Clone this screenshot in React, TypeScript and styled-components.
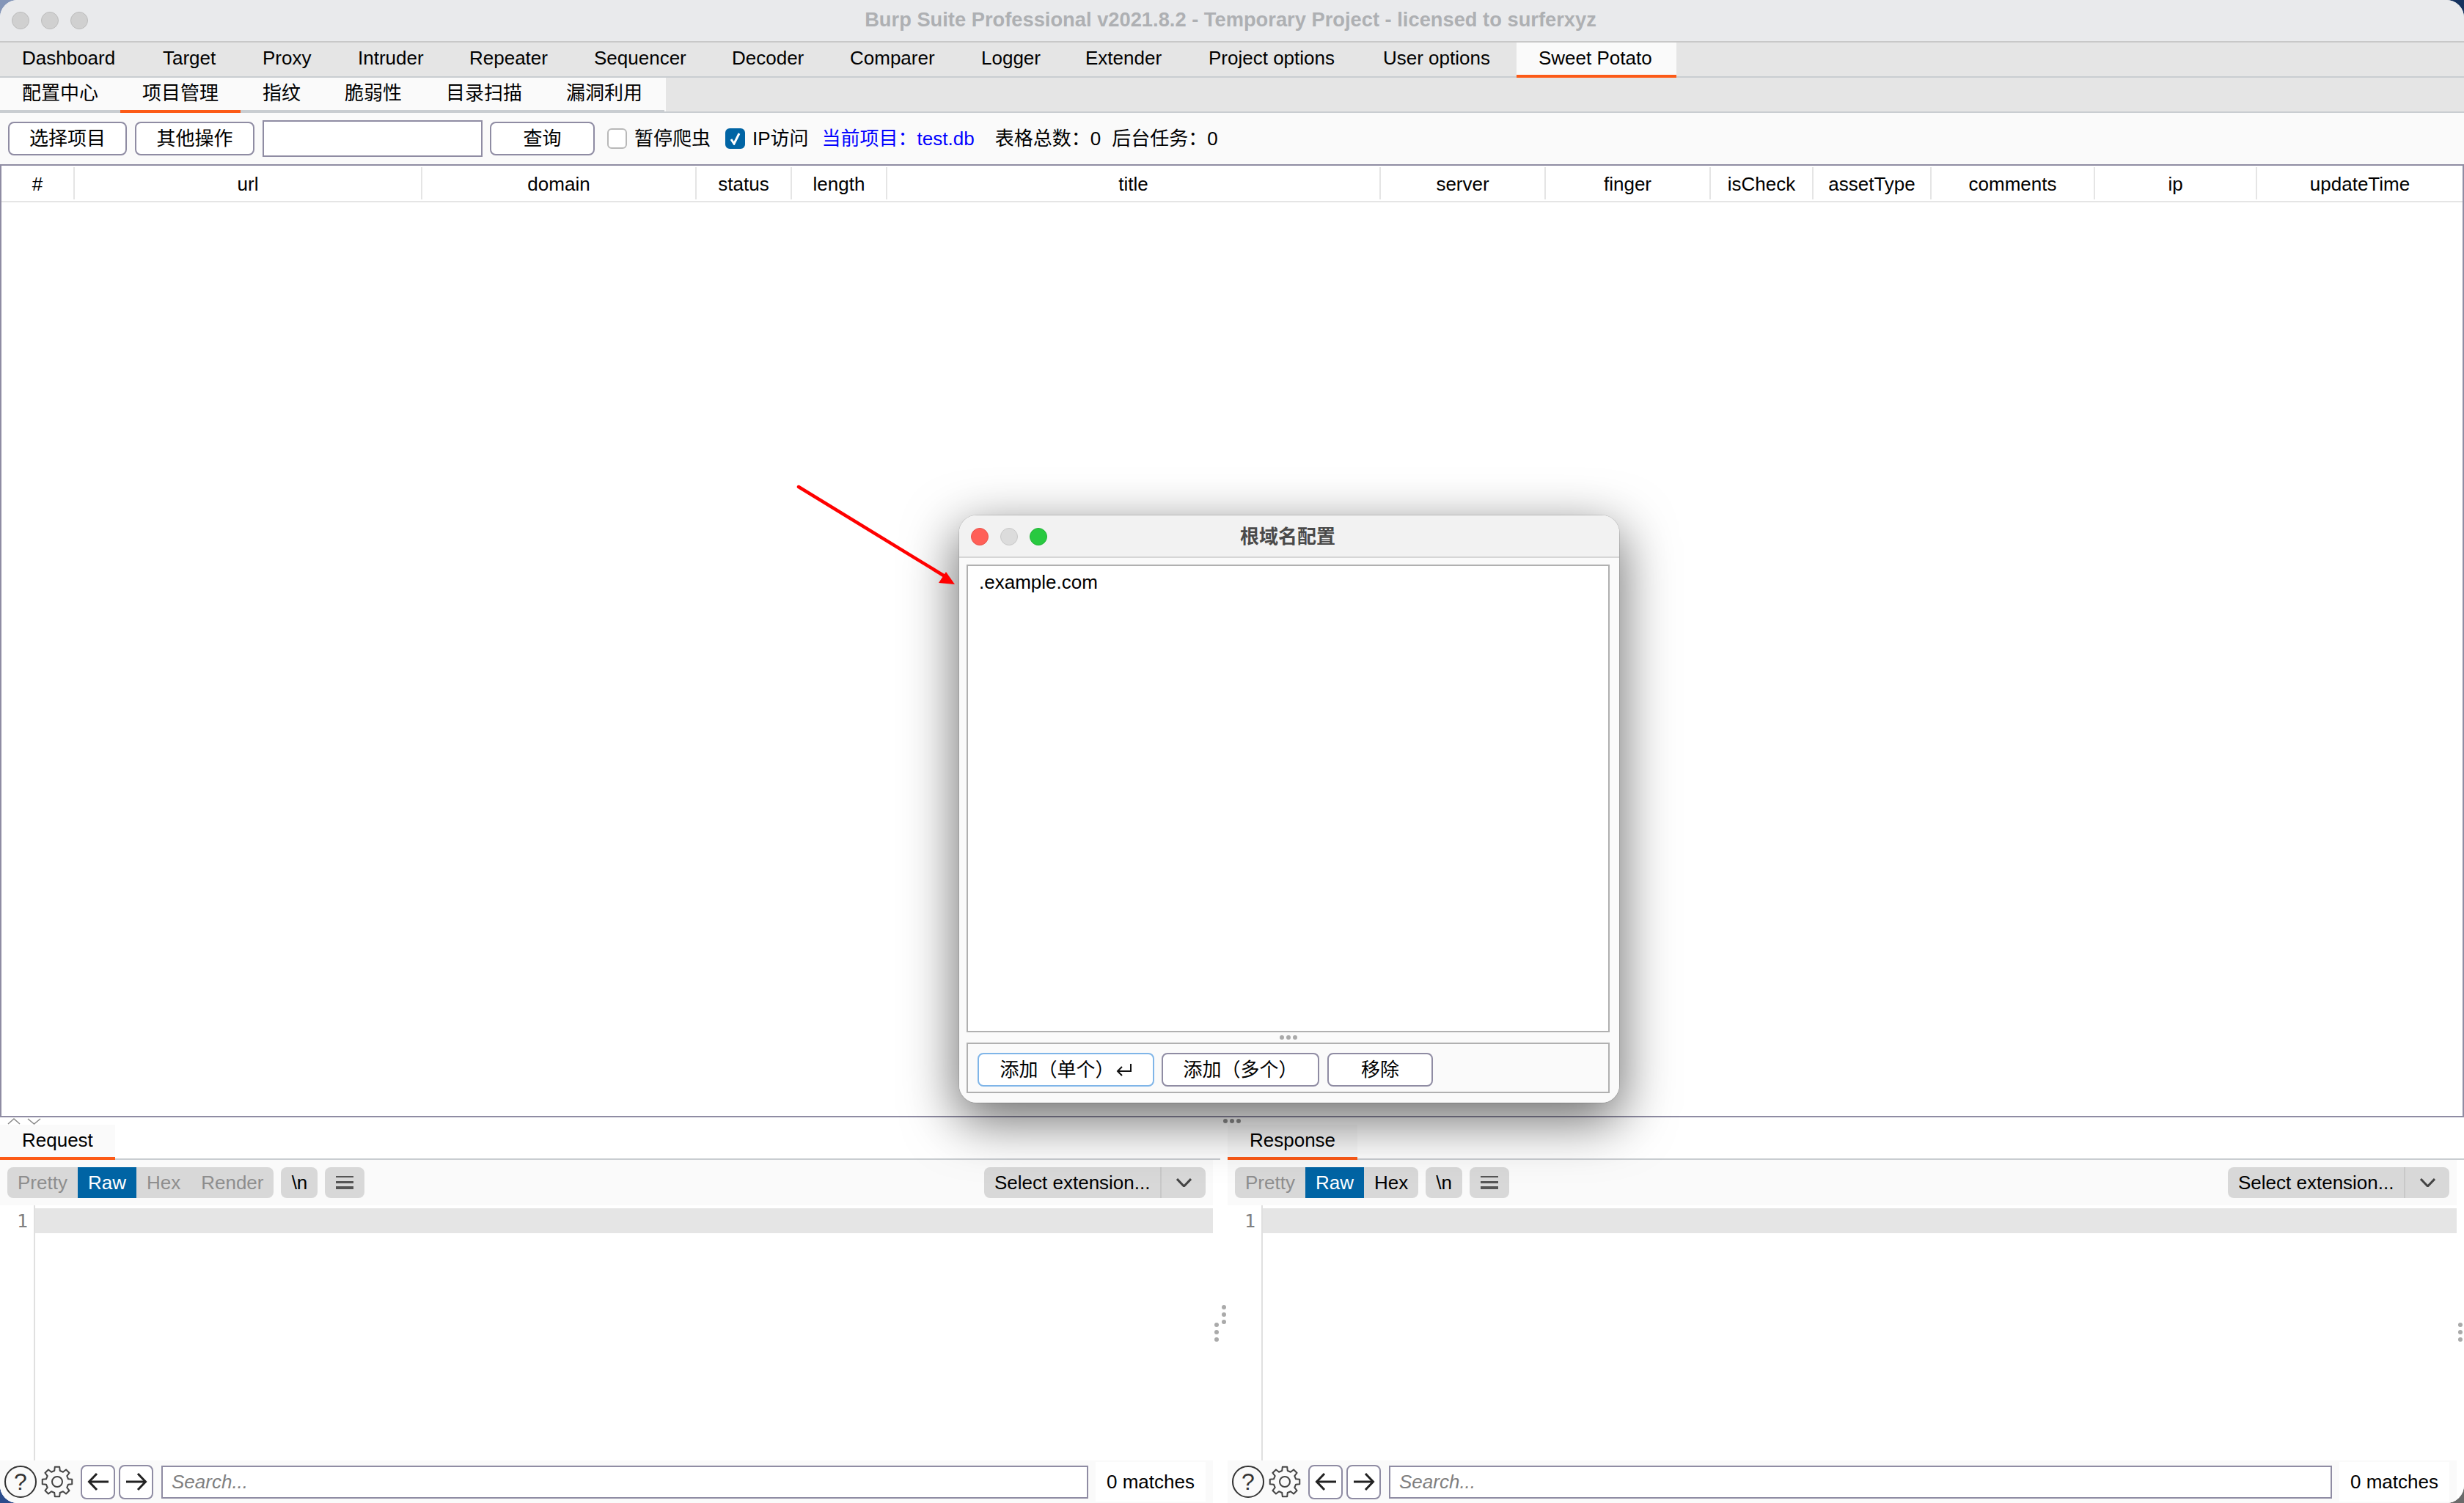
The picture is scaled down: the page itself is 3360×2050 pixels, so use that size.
import React from "react";
import styled, { createGlobalStyle } from "styled-components";

const GlobalStyle = createGlobalStyle`
  html, body {
    margin: 0;
    padding: 0;
    width: 3360px;
    height: 2050px;
    overflow: hidden;
    background: conic-gradient(#15335f 0 25%, #6a6a6a 0 50%, #2b4c8c 0 75%, #8496b8 0);
  }
  * {
    box-sizing: border-box;
  }
`;

const FONT = `"Liberation Sans", "Noto Sans CJK SC", sans-serif`;
const EDGE = "#8f8ca3";
const ORANGE = "#fc5a17";

const mainTabs: [string, number][] = [
  ["Dashboard", 192],
  ["Target", 136],
  ["Proxy", 130],
  ["Intruder", 152],
  ["Repeater", 170],
  ["Sequencer", 188],
  ["Decoder", 161],
  ["Comparer", 179],
  ["Logger", 142],
  ["Extender", 168],
  ["Project options", 238],
  ["User options", 212],
  ["Sweet Potato", 218],
];

const subTabs = ["配置中心", "项目管理", "指纹", "脆弱性", "目录扫描", "漏洞利用"];

const columns = [
  "#", "url", "domain", "status", "length", "title", "server",
  "finger", "isCheck", "assetType", "comments", "ip", "updateTime",
];

const Window = styled.div`
  position: relative;
  width: 3360px;
  height: 2050px;
  display: flex;
  flex-direction: column;
  border-radius: 24px;
  overflow: hidden;
  background: #fff;
  color: #000;
  font: 26px/30px ${FONT};
`;

const TitleBar = styled.div`
  height: 58px;
  flex: none;
  display: flex;
  align-items: center;
  justify-content: center;
  position: relative;
  padding: 0 4px 2px 0;
  background: #e9eaec;
  border-bottom: 2px solid #c8c8c8;
  color: #aeb0b3;
  font-size: 27.3px;
  font-weight: 700;
`;

const Lights = styled.div`
  position: absolute;
  left: 16px;
  top: 16px;
  display: flex;
  gap: 16px;
`;

const Light = styled.span<{ $color: string; $edge: string }>`
  width: 24px;
  height: 24px;
  border-radius: 50%;
  background: ${(p) => p.$color};
  border: 1px solid ${(p) => p.$edge};
`;

const TabBar = styled.div`
  height: 48px;
  flex: none;
  display: flex;
  background: #e5e5e5;
  border-bottom: 2px solid #c9cdd1;
`;

const MainTab = styled.div<{ $width: number; $active?: boolean }>`
  width: ${(p) => p.$width}px;
  height: 48px;
  padding: 0 0 3px 30px;
  display: flex;
  align-items: center;
  background: ${(p) => (p.$active ? "#fafafa" : "transparent")};
  border-bottom: 4px solid ${(p) => (p.$active ? ORANGE : "transparent")};
`;

const SubTab = styled.div<{ $active?: boolean }>`
  height: 48px;
  padding: 0 30px 2px;
  display: flex;
  align-items: center;
  background: #fafafa;
  border-bottom: 4px solid ${(p) => (p.$active ? ORANGE : "#c9cdd1")};
`;

const SubTabEdge = styled.div`
  width: 2px;
  background: #fafafa;
`;

const Toolbar = styled.div`
  height: 70px;
  flex: none;
  display: flex;
  align-items: center;
  padding-left: 11px;
  background: #fafafa;
`;

const Button = styled.div<{ $width: number; $gap?: number; $focus?: boolean }>`
  width: ${(p) => p.$width}px;
  height: 46px;
  flex: none;
  margin-right: ${(p) => p.$gap ?? 11}px;
  display: flex;
  align-items: center;
  justify-content: center;
  gap: 2px;
  background: #fff;
  border: 2px solid ${(p) => (p.$focus ? "#7fb5e8" : EDGE)};
  border-radius: 8px;
`;

const TextBox = styled.input`
  width: 300px;
  height: 50px;
  flex: none;
  margin-right: 10px;
  background: #fff;
  border: 2px solid ${EDGE};
  border-radius: 0;
  outline: none;
`;

const CheckBox = styled.span<{ $on?: boolean }>`
  width: 27px;
  height: 28px;
  flex: none;
  margin-right: 10px;
  display: flex;
  align-items: center;
  justify-content: center;
  border-radius: 6px;
  background: ${(p) => (p.$on ? "#0064a4" : "#fff")};
  border: 2px solid ${(p) => (p.$on ? "#0064a4" : "#b8b8b8")};
`;

const Label = styled.span<{ $gap: number; $blue?: boolean }>`
  flex: none;
  margin-right: ${(p) => p.$gap}px;
  color: ${(p) => (p.$blue ? "#0000ff" : "#000")};
  white-space: nowrap;
`;

const TableFrame = styled.div`
  flex: 1;
  min-height: 0;
  background: #fff;
  border: 2px solid ${EDGE};
`;

const HeaderRow = styled.div`
  height: 50px;
  display: grid;
  grid-template-columns: 100px 474px 374px 130px 130px 673px 225px 225px 140px 161px 223px 221px 1fr;
  border-bottom: 2px solid #e5e5e5;
`;

const HeaderCell = styled.div`
  height: 44px;
  margin-top: 2px;
  padding-top: 2px;
  display: flex;
  align-items: center;
  justify-content: center;
  border-right: 2px solid #e5e5e5;

  &:last-child {
    border-right: 0;
  }
`;

const Lower = styled.div`
  position: relative;
  height: 526px;
  flex: none;
  display: flex;
  justify-content: space-between;
  background: #fff;
`;

const Pane = styled.div<{ $width: number }>`
  width: ${(p) => p.$width}px;
  display: flex;
  flex-direction: column;
`;

const PaneTabs = styled.div`
  height: 58px;
  flex: none;
  display: flex;
  align-items: flex-end;
  border-bottom: 2px solid #c9cdd1;
`;

const PaneTab = styled.div`
  height: 48px;
  margin-bottom: -2px;
  padding: 0 30px 2px;
  display: flex;
  align-items: center;
  background: #fafafa;
  border-bottom: 4px solid ${ORANGE};
`;

const PaneInner = styled.div`
  flex: 1;
  min-height: 0;
  margin-right: 10px;
  display: flex;
  flex-direction: column;
`;

const ViewBar = styled.div`
  height: 62px;
  flex: none;
  display: flex;
  align-items: flex-start;
  gap: 10px;
  padding: 10px 10px 0;
  background: #fafafa;
`;

const Group = styled.div`
  height: 42px;
  display: flex;
  border-radius: 8px;
  overflow: hidden;
  background: #d8d8d8;
`;

const Segment = styled.div<{ $state: "off" | "on" | "plain" }>`
  padding: 0 14px;
  display: flex;
  align-items: center;
  color: ${(p) => (p.$state === "off" ? "#8e8e8e" : p.$state === "on" ? "#fff" : "#000")};
  background: ${(p) => (p.$state === "on" ? "#0064a4" : "transparent")};
`;

const IconChip = styled.div<{ $width: number }>`
  width: ${(p) => p.$width}px;
  height: 42px;
  display: flex;
  align-items: center;
  justify-content: center;
  border-radius: 8px;
  background: #d8d8d8;
`;

const SelectBox = styled.div`
  width: 302px;
  height: 42px;
  margin-left: auto;
  display: flex;
  align-items: center;
  border-radius: 8px;
  background: #d8d8d8;
  white-space: nowrap;
`;

const SelectText = styled.div`
  width: 242px;
  height: 42px;
  padding-left: 14px;
  display: flex;
  align-items: center;
  border-right: 2px solid #c8c8c8;
`;

const SelectArrow = styled.div`
  flex: 1;
  display: flex;
  align-items: center;
  justify-content: center;
`;

const Editor = styled.div`
  flex: 1;
  min-height: 0;
  display: flex;
  background: #fff;
`;

const Gutter = styled.div`
  width: 48px;
  flex: none;
  padding: 5px 8px 0 0;
  text-align: right;
  border-right: 2px solid #e0e0e0;
  color: #808080;
  font: 25px/34px "DejaVu Sans Mono", monospace;
`;

const LineHighlight = styled.div`
  flex: 1;
  height: 34px;
  margin-top: 4px;
  background: #e5e5e5;
`;

const SearchBar = styled.div`
  height: 58px;
  flex: none;
  display: flex;
  align-items: center;
  padding: 0 10px 0 6px;
  background: #fafafa;
`;

const HelpIcon = styled.span`
  width: 44px;
  height: 44px;
  flex: none;
  display: flex;
  align-items: center;
  justify-content: center;
  border: 2px solid #333;
  border-radius: 50%;
  color: #333;
  font-size: 32px;
`;

const GearIcon = styled.svg`
  width: 44px;
  height: 44px;
  flex: none;
  margin: 0 10px 0 6px;
`;

const ArrowButton = styled.div`
  width: 47px;
  height: 47px;
  flex: none;
  margin-right: 5px;
  display: flex;
  align-items: center;
  justify-content: center;
  background: #fff;
  border: 2px solid ${EDGE};
  border-radius: 8px;
`;

const SearchInput = styled.input`
  flex: 1;
  min-width: 0;
  height: 45px;
  margin-left: 6px;
  padding: 0 12px;
  background: #fff;
  border: 2px solid ${EDGE};
  border-radius: 0;
  outline: none;
  font: italic 26px ${FONT};

  &::placeholder {
    color: #808080;
    opacity: 1;
  }
`;

const Matches = styled.div`
  width: 150px;
  height: 54px;
  flex: none;
  margin-left: 10px;
  display: flex;
  align-items: center;
  justify-content: center;
  background: #fff;
`;

const Dots = styled.div<{ $column?: boolean; $color?: string }>`
  display: flex;
  flex-direction: ${(p) => (p.$column ? "column" : "row")};
  gap: ${(p) => (p.$column ? "4px" : "3px")};

  span {
    width: 6px;
    height: 6px;
    border-radius: 50%;
    background: ${(p) => p.$color ?? "#aaa"};
  }
`;

const Grip = styled.div<{ $left: number; $top: number }>`
  position: absolute;
  left: ${(p) => p.$left}px;
  top: ${(p) => p.$top}px;
  display: flex;
`;

const Dialog = styled.div`
  position: absolute;
  left: 1308px;
  top: 703px;
  width: 900px;
  height: 801px;
  display: flex;
  flex-direction: column;
  border-radius: 24px;
  overflow: hidden;
  background: #fafafa;
`;

const DialogShadow = styled.div`
  position: absolute;
  left: 1308px;
  top: 703px;
  width: 900px;
  height: 801px;
  border-radius: 24px;
  box-shadow: 0 22px 70px 4px rgba(0, 0, 0, 0.56), 0 0 0 1px rgba(0, 0, 0, 0.12);
`;

const DialogTitle = styled.div`
  height: 58px;
  flex: none;
  position: relative;
  display: flex;
  align-items: center;
  justify-content: center;
  padding: 2px 4px 0 0;
  background: #f2f2f2;
  border-bottom: 2px solid #d6d6d6;
  color: #4a4a4a;
  font-weight: 700;
`;

const DialogLights = styled(Lights)`
  top: 17px;
`;

const DialogBody = styled.div`
  flex: 1;
  min-height: 0;
  display: flex;
  flex-direction: column;
  padding: 9px 13px 13px 10px;
`;

const DomainArea = styled.div`
  flex: 1;
  min-height: 0;
  padding: 7px 15px;
  background: #fff;
  border: 2px solid #b0b0b0;
`;

const DialogGrip = styled.div`
  height: 14px;
  flex: none;
  display: flex;
  align-items: center;
  justify-content: center;
`;

const DialogActions = styled.div`
  height: 69px;
  flex: none;
  display: flex;
  align-items: center;
  padding: 5px 0 0 13px;
  background: #fafafa;
  border: 2px solid #b0b0b0;
`;

const Annotation = styled.svg`
  position: absolute;
  left: 1080px;
  top: 655px;
  width: 230px;
  height: 150px;
`;

const gearPath = (() => {
  const pts: string[] = [];
  const at = (r: number, deg: number) => {
    const a = (deg * Math.PI) / 180;
    return `${(22 + r * Math.cos(a)).toFixed(2)} ${(22 + r * Math.sin(a)).toFixed(2)}`;
  };
  for (let i = 0; i < 8; i++) {
    const a = i * 45 - 90;
    pts.push(at(15.5, a - 14), at(20.5, a - 9), at(20.5, a + 9), at(15.5, a + 14));
  }
  return `M${pts.join("L")}Z`;
})();

const Gear = () => (
  <GearIcon viewBox="0 0 44 44" fill="none" stroke="#444" strokeWidth="2">
    <path d={gearPath} strokeLinejoin="round" />
    <circle cx="22" cy="22" r="7" />
  </GearIcon>
);

const Arrow = ({ dir }: { dir: "left" | "right" }) => (
  <svg width="30" height="26" viewBox="0 0 30 26" fill="none" stroke="#222" strokeWidth="3">
    {dir === "left" ? (
      <>
        <path d="M2 13H29" />
        <path d="M13 2 2.5 13 13 24" />
      </>
    ) : (
      <>
        <path d="M1 13H28" />
        <path d="M17 2 27.5 13 17 24" />
      </>
    )}
  </svg>
);

const MenuBars = () => (
  <svg width="24" height="18" viewBox="0 0 24 18" fill="#555">
    <rect x="0" y="0" width="24" height="2" />
    <rect x="0" y="7" width="24" height="3" />
    <rect x="0" y="14" width="24" height="4" />
  </svg>
);

const Chevron = ({ up, w, h, color, sw }: { up?: boolean; w: number; h: number; color: string; sw: number }) => (
  <svg width={w} height={h} viewBox={`0 0 ${w} ${h}`} fill="none" stroke={color} strokeWidth={sw}>
    <path d={up ? `M1 ${h - 1} ${w / 2} 1 ${w - 1} ${h - 1}` : `M1 1 ${w / 2} ${h - 1} ${w - 1} 1`} />
  </svg>
);

const ThreeDots = ({ column, color }: { column?: boolean; color?: string }) => (
  <Dots $column={column} $color={color}>
    <span />
    <span />
    <span />
  </Dots>
);

const MessagePane = ({ name, width, full, hexOn }: { name: string; width: number; full: boolean; hexOn: boolean }) => (
  <Pane $width={width}>
    <PaneTabs>
      <PaneTab>{name}</PaneTab>
    </PaneTabs>
    <PaneInner>
      <ViewBar>
        <Group>
          <Segment $state="off">Pretty</Segment>
          <Segment $state="on">Raw</Segment>
          <Segment $state={hexOn ? "plain" : "off"}>Hex</Segment>
          {full && <Segment $state="off">Render</Segment>}
        </Group>
        <IconChip $width={50}>\n</IconChip>
        <IconChip $width={54}>
          <MenuBars />
        </IconChip>
        <SelectBox>
          <SelectText>Select extension...</SelectText>
          <SelectArrow>
            <Chevron w={21} h={12} color="#444" sw={3} />
          </SelectArrow>
        </SelectBox>
      </ViewBar>
      <Editor>
        <Gutter>1</Gutter>
        <LineHighlight />
      </Editor>
      <SearchBar>
        <HelpIcon>?</HelpIcon>
        <Gear />
        <ArrowButton>
          <Arrow dir="left" />
        </ArrowButton>
        <ArrowButton>
          <Arrow dir="right" />
        </ArrowButton>
        <SearchInput placeholder="Search..." readOnly />
        <Matches>0 matches</Matches>
      </SearchBar>
    </PaneInner>
  </Pane>
);

export default function App() {
  return (
    <>
      <GlobalStyle />
      <Window>
        <TitleBar>
          <Lights>
            <Light $color="#d0d0d0" $edge="#bcbcbc" />
            <Light $color="#d0d0d0" $edge="#bcbcbc" />
            <Light $color="#d0d0d0" $edge="#bcbcbc" />
          </Lights>
          Burp Suite Professional v2021.8.2 - Temporary Project - licensed to surferxyz
        </TitleBar>

        <TabBar>
          {mainTabs.map(([label, width]) => (
            <MainTab key={label} $width={width} $active={label === "Sweet Potato"}>
              {label}
            </MainTab>
          ))}
        </TabBar>

        <TabBar>
          {subTabs.map((label) => (
            <SubTab key={label} $active={label === "项目管理"}>
              {label}
            </SubTab>
          ))}
          <SubTabEdge />
        </TabBar>

        <Toolbar>
          <Button $width={162}>选择项目</Button>
          <Button $width={163}>其他操作</Button>
          <TextBox readOnly />
          <Button $width={143} $gap={17}>查询</Button>
          <CheckBox />
          <Label $gap={20}>暂停爬虫</Label>
          <CheckBox $on>
            <svg width="15" height="18" viewBox="0 0 15 18" fill="none" stroke="#fff" strokeWidth="3">
              <path d="M2 10l4 6 7-14" />
            </svg>
          </CheckBox>
          <Label $gap={18}>IP访问</Label>
          <Label $gap={28} $blue>当前项目：test.db</Label>
          <Label $gap={15}>表格总数：0</Label>
          <Label $gap={0}>后台任务：0</Label>
        </Toolbar>

        <TableFrame>
          <HeaderRow>
            {columns.map((c) => (
              <HeaderCell key={c}>{c}</HeaderCell>
            ))}
          </HeaderRow>
        </TableFrame>

        <Lower>
          <MessagePane name="Request" width={1664} full hexOn={false} />
          <MessagePane name="Response" width={1686} full={false} hexOn />
          <Grip $left={10} $top={1}>
            <Chevron up w={18} h={9} color="#888" sw={1.5} />
          </Grip>
          <Grip $left={37} $top={1}>
            <Chevron w={19} h={9} color="#888" sw={1.5} />
          </Grip>
          <Grip $left={1668} $top={2}>
            <ThreeDots color="#8f8f8f" />
          </Grip>
          <Grip $left={1666} $top={256}>
            <ThreeDots column />
          </Grip>
          <Grip $left={1656} $top={280}>
            <ThreeDots column />
          </Grip>
          <Grip $left={3352} $top={280}>
            <ThreeDots column />
          </Grip>
        </Lower>

        <DialogShadow />
        <Dialog>
          <DialogTitle>
            <DialogLights>
              <Light $color="#ff5f57" $edge="#e8524a" />
              <Light $color="#dcdcdc" $edge="#c8c8c8" />
              <Light $color="#28c940" $edge="#22b338" />
            </DialogLights>
            根域名配置
          </DialogTitle>
          <DialogBody>
            <DomainArea>.example.com</DomainArea>
            <DialogGrip>
              <ThreeDots />
            </DialogGrip>
            <DialogActions>
              <Button $width={241} $gap={10} $focus>
                添加（单个）
                <svg width="22" height="18" viewBox="0 0 22 18" fill="none" stroke="#111" strokeWidth="2">
                  <path d="M20 1V11H2" />
                  <path d="M8 5 2 11 8 17" />
                </svg>
              </Button>
              <Button $width={215} $gap={11}>添加（多个）</Button>
              <Button $width={144}>移除</Button>
            </DialogActions>
          </DialogBody>
        </Dialog>

        <Annotation viewBox="1080 655 230 150">
          <path d="M1089 664 1290 787" stroke="#ff0000" strokeWidth="4.5" strokeLinecap="round" />
          <path d="M1302 797 1280 795 1290 780Z" fill="#ff0000" />
        </Annotation>
      </Window>
    </>
  );
}
